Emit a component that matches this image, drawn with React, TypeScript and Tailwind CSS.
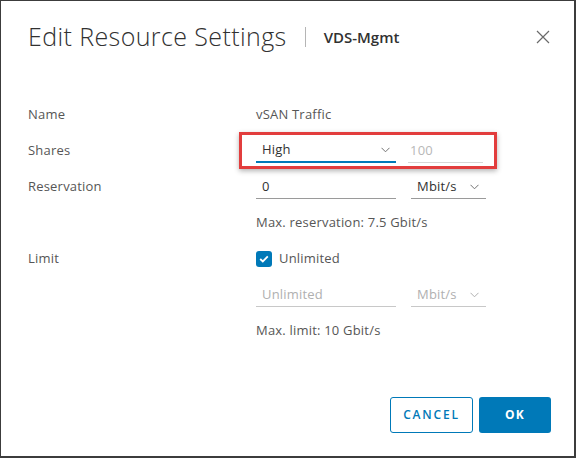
import React from "react";

const font = { fontFamily: "'Open Sans', 'Noto Sans', sans-serif" };

function Chevron({ color = "#737373" }: { color?: string }) {
  return (
    <svg width="9" height="6" viewBox="0 0 9 6" fill="none">
      <path d="M0.5 0.8 L4.5 4.8 L8.5 0.8" stroke={color} strokeWidth="1" />
    </svg>
  );
}

function Row({ label, children }: { label?: string; children: React.ReactNode }) {
  return (
    <div className="grid grid-cols-[228px_1fr] h-9 items-center">
      <div className="text-[13px] text-[#565656] tracking-[0.2px]">{label}</div>
      <div className="flex items-center tracking-[0.2px]">{children}</div>
    </div>
  );
}

export default function App() {
  return (
    <div
      style={font}
      className="relative w-[576px] h-[458px] bg-white border-t border-l border-r-2 border-b-2 border-[#3c3c3c] flex flex-col"
    >
      {/* Header */}
      <div className="h-[72px] flex items-center pl-[27px] pr-[23px]">
        <h1 className="text-[25px] font-light text-[#313131] tracking-[0.4px]">Edit Resource Settings</h1>
        <div className="w-px h-[20px] bg-[#b5b5b5] ml-[18px] mr-[18px]" />
        <span className="text-[15px] font-semibold text-[#313131]">VDS-Mgmt</span>
        <button className="ml-auto w-[16px] h-[16px] flex items-center justify-center">
          <svg width="14" height="14" viewBox="0 0 14 14" fill="none">
            <path d="M1 1 L13 13 M13 1 L1 13" stroke="#6a6a6a" strokeWidth="1.2" />
          </svg>
        </button>
      </div>

      {/* Form */}
      <div className="mt-[24px] pl-[27px]">
        <Row label="Name">
          <span className="text-[13px] text-[#565656]">vSAN Traffic</span>
        </Row>
        <Row label="Shares">
          <div className="w-[140px] h-6 border-b-2 border-[#0079b8] flex items-center justify-between pl-[6px] pr-[6px]">
            <span className="text-[13px] text-[#313131]">High</span>
            <Chevron />
          </div>
          <div className="ml-[12px] w-[75px] h-6 border-b border-[#d7d7d7] flex items-center pl-[2px]">
            <span className="text-[13px] text-[#b8b8b8]">100</span>
          </div>
        </Row>
        <Row label="Reservation">
          <div className="w-[140px] h-6 border-b border-[#9a9a9a] flex items-center pl-[6px] pt-[1px]">
            <span className="text-[13px] text-[#313131]">0</span>
          </div>
          <div className="ml-[15px] w-[75px] h-6 border-b border-[#9a9a9a] flex items-center justify-between pl-[6px] pr-[7px] pt-[1px]">
            <span className="text-[13px] text-[#313131]">Mbit/s</span>
            <Chevron />
          </div>
        </Row>
        <Row>
          <span className="text-[13px] text-[#565656]">Max. reservation: 7.5 Gbit/s</span>
        </Row>
        <Row label="Limit">
          <div className="w-[16px] h-[16px] rounded-[3px] bg-[#0079b8] flex items-center justify-center">
            <svg width="10" height="8" viewBox="0 0 10 8" fill="none">
              <path d="M1.2 4 L3.8 6.4 L8.8 1.4" stroke="white" strokeWidth="1.8" />
            </svg>
          </div>
          <span className="ml-[7px] text-[13px] text-[#565656]">Unlimited</span>
        </Row>
        <Row>
          <div className="w-[140px] h-6 border-b border-[#c8c8c8] flex items-center pl-[6px] pt-[1px]">
            <span className="text-[13px] text-[#b0b0b0]">Unlimited</span>
          </div>
          <div className="ml-[15px] w-[75px] h-6 border-b border-[#c8c8c8] flex items-center justify-between pl-[6px] pr-[7px] pt-[1px]">
            <span className="text-[13px] text-[#b0b0b0]">Mbit/s</span>
            <Chevron color="#b0b0b0" />
          </div>
        </Row>
        <Row>
          <span className="text-[13px] text-[#565656]">Max. limit: 10 Gbit/s</span>
        </Row>
      </div>

      {/* Footer */}
      <div className="mt-auto flex justify-end gap-[6px] pr-[23px] pb-[23px]">
        <button className="w-[83px] h-9 rounded-[3px] border border-[#0079b8] text-[#0079b8] text-[12px] font-semibold tracking-[1.8px]">
          CANCEL
        </button>
        <button className="w-[72px] h-9 rounded-[3px] bg-[#0079b8] text-white text-[12px] font-bold tracking-[1.2px]">
          OK
        </button>
      </div>

      {/* Annotation highlight */}
      <div className="absolute left-[238px] top-[131px] w-[258px] h-[37px] border-[3px] border-[#e23d3d] shadow-[0_2px_5px_rgba(0,0,0,0.3)]" />
    </div>
  );
}
